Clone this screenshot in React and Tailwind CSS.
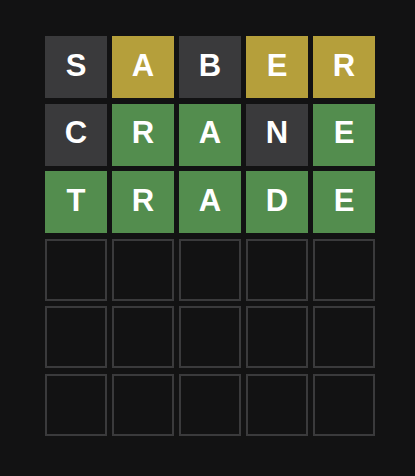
const rows = [
  [["S", "gray"], ["A", "yellow"], ["B", "gray"], ["E", "yellow"], ["R", "yellow"]],
  [["C", "gray"], ["R", "green"], ["A", "green"], ["N", "gray"], ["E", "green"]],
  [["T", "green"], ["R", "green"], ["A", "green"], ["D", "green"], ["E", "green"]],
];

const tileColor = {
  gray: "bg-[#3a3a3c]",
  yellow: "bg-[#b59f3b]",
  green: "bg-[#538d4e]",
};

function Tile({ letter, state }) {
  if (!letter) {
    return <div className="h-[62px] w-[62px] border-2 border-[#3a3a3c] bg-[#121213]" />;
  }
  return (
    <div
      className={`flex h-[62px] w-[62px] items-center justify-center pb-[2px] text-[31px] font-bold uppercase text-white ${tileColor[state]}`}
    >
      {letter}
    </div>
  );
}

export default function App() {
  const board = [...rows];
  while (board.length < 6) board.push([]);

  return (
    <div
      className="min-h-[476px] w-full bg-[#121213] pl-[45px] pt-[36px]"
      style={{ fontFamily: '"Liberation Sans", Arial, sans-serif' }}
    >
      <div className="grid w-[330px] grid-cols-5 gap-x-[5px] gap-y-[5.6px]">
        {board.map((row, r) =>
          [0, 1, 2, 3, 4].map((c) => (
            <Tile key={`${r}-${c}`} letter={row[c]?.[0]} state={row[c]?.[1]} />
          ))
        )}
      </div>
    </div>
  );
}
